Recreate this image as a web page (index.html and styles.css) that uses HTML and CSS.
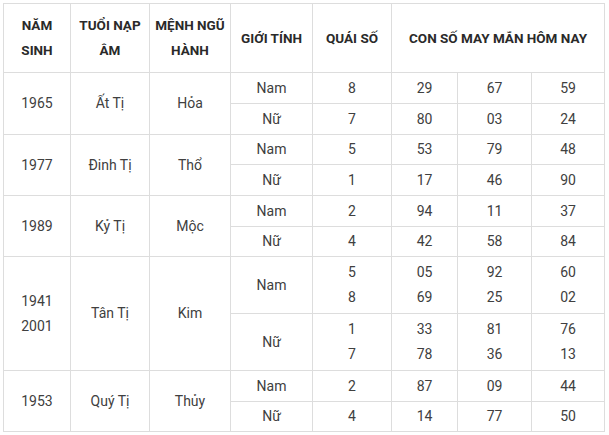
FILE: index.html
```html
<!DOCTYPE html>
<html lang="vi">
<head>
<meta charset="utf-8">
<title>Con số may mắn</title>
<link rel="stylesheet" href="styles.css">
</head>
<body>
<table class="lucky">
  <colgroup>
    <col class="c-year">
    <col class="c-tuoi">
    <col class="c-menh">
    <col class="c-gioi">
    <col class="c-quai">
    <col class="c-n1">
    <col class="c-n2">
    <col class="c-n3">
  </colgroup>
  <thead>
    <tr class="r-head">
      <th>NĂM<br>SINH</th>
      <th>TUỔI NẠP<br>ÂM</th>
      <th>MỆNH NGŨ<br>HÀNH</th>
      <th>GIỚI TÍNH</th>
      <th>QUÁI SỐ</th>
      <th colspan="3">CON SỐ MAY MẮN HÔM NAY</th>
    </tr>
  </thead>
  <tbody>
    <tr class="r-a">
      <td rowspan="2">1965</td><td rowspan="2">Ất Tị</td><td rowspan="2">Hỏa</td>
      <td>Nam</td><td>8</td><td>29</td><td>67</td><td>59</td>
    </tr>
    <tr class="r-a">
      <td>Nữ</td><td>7</td><td>80</td><td>03</td><td>24</td>
    </tr>
    <tr class="r-b">
      <td rowspan="2">1977</td><td rowspan="2">Đinh Tị</td><td rowspan="2">Thổ</td>
      <td>Nam</td><td>5</td><td>53</td><td>79</td><td>48</td>
    </tr>
    <tr class="r-a">
      <td>Nữ</td><td>1</td><td>17</td><td>46</td><td>90</td>
    </tr>
    <tr class="r-a">
      <td rowspan="2">1989</td><td rowspan="2">Kỷ Tị</td><td rowspan="2">Mộc</td>
      <td>Nam</td><td>2</td><td>94</td><td>11</td><td>37</td>
    </tr>
    <tr class="r-b">
      <td>Nữ</td><td>4</td><td>42</td><td>58</td><td>84</td>
    </tr>
    <tr class="r-2">
      <td rowspan="2">1941<br>2001</td><td rowspan="2">Tân Tị</td><td rowspan="2">Kim</td>
      <td>Nam</td><td class="dbl">5<br>8</td><td class="dbl">05<br>69</td><td class="dbl">92<br>25</td><td class="dbl">60<br>02</td>
    </tr>
    <tr class="r-2">
      <td>Nữ</td><td class="dbl">1<br>7</td><td class="dbl">33<br>78</td><td class="dbl">81<br>36</td><td class="dbl">76<br>13</td>
    </tr>
    <tr class="r-a">
      <td rowspan="2">1953</td><td rowspan="2">Quý Tị</td><td rowspan="2">Thủy</td>
      <td>Nam</td><td>2</td><td>87</td><td>09</td><td>44</td>
    </tr>
    <tr class="r-b">
      <td>Nữ</td><td>4</td><td>14</td><td>77</td><td>50</td>
    </tr>
  </tbody>
</table>
</body>
</html>
```
FILE: styles.css
```css
html, body {
  margin: 0;
  padding: 0;
  background: #ffffff;
}
body {
  padding: 3px 0 0 3px;
  font-family: Roboto, "Liberation Sans", Arial, sans-serif;
  font-size: 14px;
  color: #404040;
}
.lucky {
  border-collapse: collapse;
  table-layout: fixed;
  width: 602px;
}
.lucky th,
.lucky td {
  border: 1px solid #dddddd;
  padding: 0;
  text-align: center;
  vertical-align: middle;
  line-height: 25px;
}
.lucky th {
  font-size: 13.5px;
  font-weight: 700;
  color: #2a2a2a;
}
.c-year { width: 67px; }
.c-tuoi { width: 79px; }
.c-menh { width: 81px; }
.c-gioi { width: 82px; }
.c-quai { width: 79px; }
.c-n1 { width: 66px; }
.c-n2 { width: 74px; }
.c-n3 { width: 73px; }
.r-head { height: 69px; }
.r-a { height: 31px; }
.r-b { height: 30px; }
.r-2 { height: 57px; }
.dbl { line-height: 26px; }
```
